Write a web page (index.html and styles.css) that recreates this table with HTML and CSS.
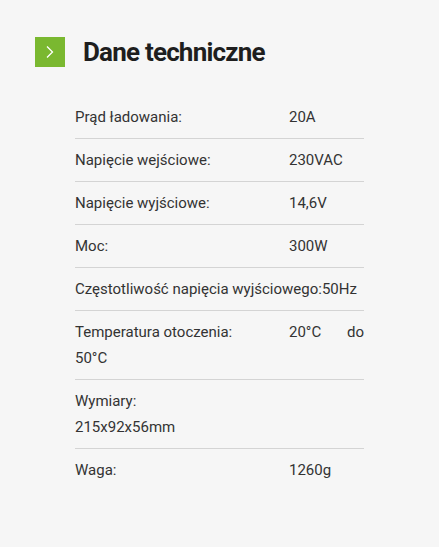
FILE: index.html
```html
<!DOCTYPE html>
<html lang="pl">
<head>
<meta charset="utf-8">
<link rel="stylesheet" href="styles.css">
</head>
<body>
<section class="specs">
  <h2 class="title">
    <span class="badge"><svg width="30" height="30" viewBox="0 0 30 30"><path d="M12 9.5 L17.5 15 L12 20.5" fill="none" stroke="#fff" stroke-width="1.3"/></svg></span>
    <span class="title-text">Dane techniczne</span>
  </h2>
  <div class="table">
    <p class="row"><span class="label">Prąd ładowania:</span><wbr>20A</p>
    <p class="row"><span class="label">Napięcie wejściowe:</span><wbr>230VAC</p>
    <p class="row"><span class="label">Napięcie wyjściowe:</span><wbr>14,6V</p>
    <p class="row"><span class="label">Moc:</span><wbr>300W</p>
    <p class="row"><span class="label">Częstotliwość napięcia wyjściowego:</span><wbr>50Hz</p>
    <p class="row"><span class="label">Temperatura otoczenia:</span><wbr>20°C do 50°C</p>
    <p class="row"><span class="label">Wymiary:</span><wbr>215x92x56mm</p>
    <p class="row"><span class="label">Waga:</span><wbr>1260g</p>
  </div>
</section>
</body>
</html>
```
FILE: styles.css
```css
html, body {
  margin: 0;
  padding: 0;
  background: #f6f6f6;
}
body {
  font-family: Roboto, "Liberation Sans", sans-serif;
  color: #333;
}
.specs {
  padding: 37px 0 0 35px;
}
.title {
  display: flex;
  align-items: center;
  margin: 0;
  height: 30px;
}
.badge {
  width: 30px;
  height: 30px;
  background: #7ab830;
  display: block;
}
.badge svg { display: block; }
.title-text {
  margin-left: 18px;
  font-family: Roboto, "DejaVu Sans Condensed", sans-serif;
  font-weight: 700;
  font-size: 26px;
  color: #1e1e1e;
  letter-spacing: -0.8px;
}
.table {
  margin: 29px 0 0 40px;
  width: 289px;
}
.row {
  margin: 0;
  padding: 8px 0;
  font-size: 15px;
  line-height: 26px;
  text-align: justify;
  border-bottom: 1px solid #d4d4d4;
}
.row:last-child {
  border-bottom: none;
}
.label {
  display: inline-block;
  min-width: 214px;
}
```
